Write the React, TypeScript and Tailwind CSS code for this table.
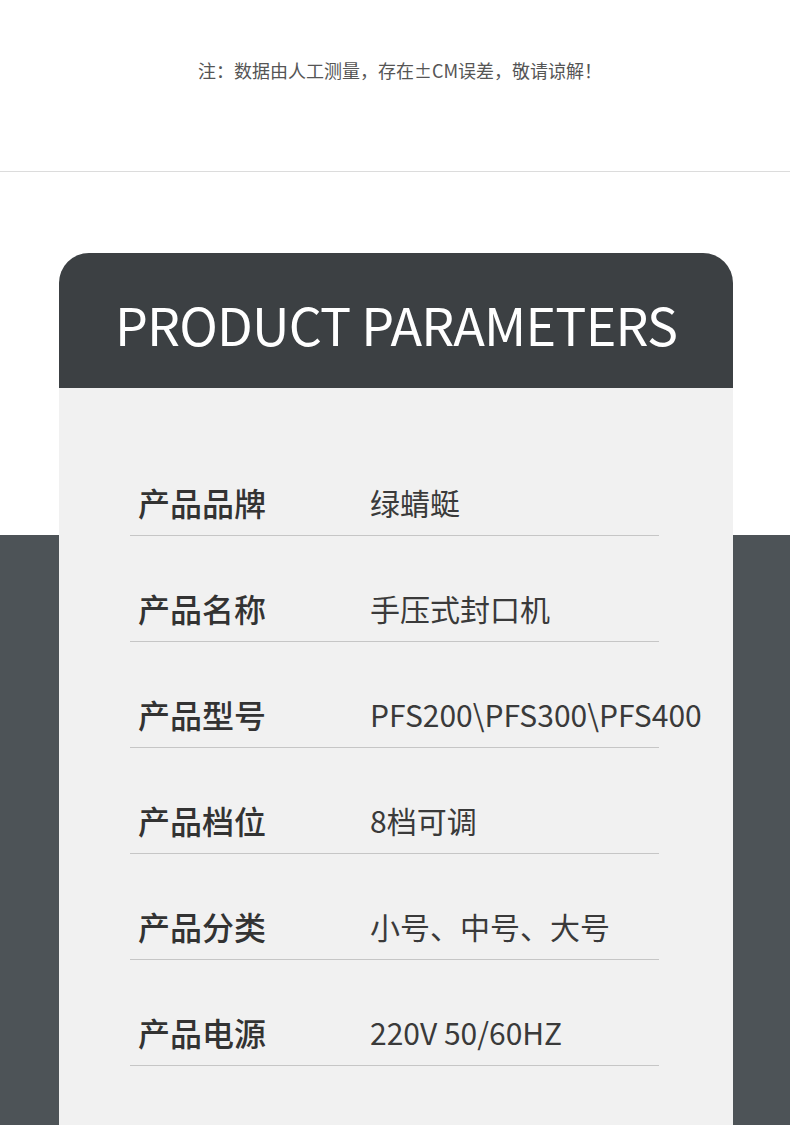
const ROWS = [
  { label: "产品品牌", value: "绿蜻蜓" },
  { label: "产品名称", value: "手压式封口机" },
  { label: "产品型号", value: "PFS200\\PFS300\\PFS400" },
  { label: "产品档位", value: "8档可调" },
  { label: "产品分类", value: "小号、中号、大号" },
  { label: "产品电源", value: "220V 50/60HZ" },
];

export default function App() {
  return (
    <div className="w-[790px] bg-white font-['Noto_Sans_CJK_SC',sans-serif]">
      {/* Note */}
      <div className="h-[172px] border-b border-[#dcdcdc] pl-[10px] pt-[57px] text-center text-[18px] leading-[26px] text-[#555]">
        注：数据由人工测量，存在±CM误差，敬请谅解！
      </div>

      {/* Parameters */}
      <div className="bg-[linear-gradient(to_bottom,#ffffff_363px,#4d5357_363px)] pt-[81px]">
        <div className="ml-[59px] w-[674px] overflow-hidden rounded-t-[30px]">
          <div className="flex h-[135px] items-center justify-center bg-[#3c4043] pt-[6px]">
            <h1 className="text-[52px] font-normal leading-none tracking-[-0.8px] text-white">
              PRODUCT PARAMETERS
            </h1>
          </div>
          <div className="bg-[#f1f1f1] pb-[80px] pl-[71px] pt-[42px]">
            {ROWS.map((row) => (
              <div
                key={row.label}
                className="flex h-[106px] w-[529px] items-center border-b border-[#c6c6c6] pt-[39px]"
              >
                <div className="w-[240px] shrink-0 pl-[8px] text-[32px] font-medium leading-[32px] text-[#333]">
                  {row.label}
                </div>
                <div className="whitespace-nowrap text-[30px] leading-[30px] text-[#3a3a3a]">
                  {row.value}
                </div>
              </div>
            ))}
          </div>
        </div>
      </div>
    </div>
  );
}
